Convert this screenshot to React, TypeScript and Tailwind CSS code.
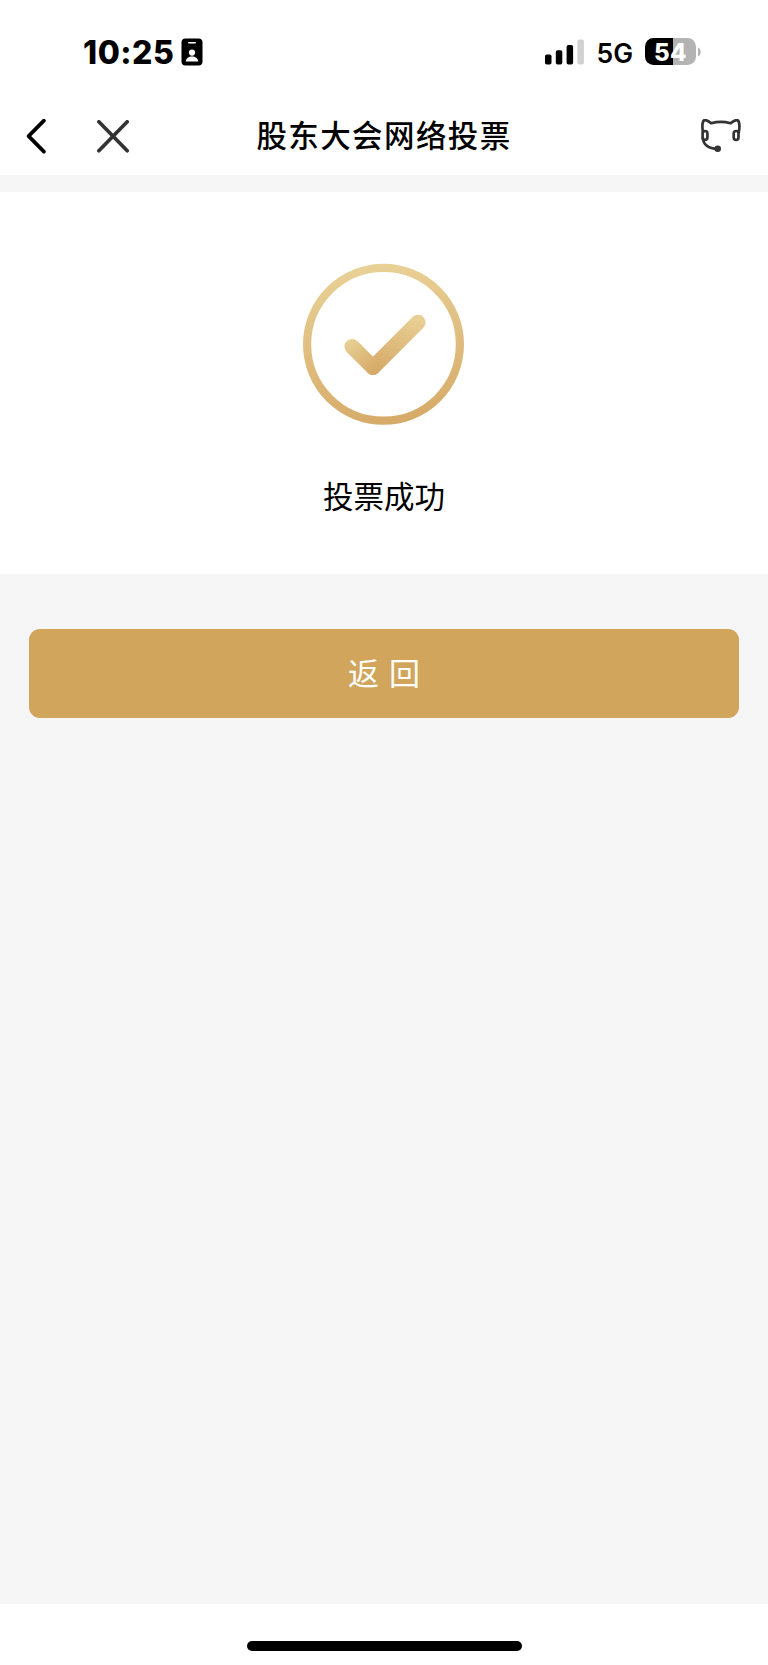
const StatusBar = () => {
  return (
    <div className="flex h-[100px] shrink-0 items-start justify-between pt-[32px] pr-[67px] pl-[83px]">
      <div className="flex h-10 items-center">
        <span className="w-[98px] pt-[2px] whitespace-nowrap font-['Inter',sans-serif] text-[32px] leading-10 font-extrabold tracking-[0.5px]">
          10:25
        </span>
        <svg width="22" height="28" viewBox="0 0 22 28">
          <rect x="0.5" y="0.5" width="21" height="27" rx="4" fill="#000" />
          <rect x="7" y="3.9" width="8" height="1.7" rx="0.8" fill="#fff" />
          <circle cx="11" cy="14.6" r="3.1" fill="#fff" />
          <path d="M5 23.4c0-3.2 2.6-4.8 6-4.8s6 1.6 6 4.8z" fill="#fff" />
        </svg>
      </div>
      <div className="flex h-10 items-center">
        <svg width="40" height="26" viewBox="0 0 40 26">
          <rect x="0" y="15.5" width="6.5" height="10" rx="1.8" />
          <rect x="10.8" y="11.3" width="6.5" height="14.2" rx="1.8" />
          <rect x="21.6" y="6" width="6.5" height="19.5" rx="1.8" />
          <rect x="32.4" y="0.6" width="6.5" height="24.9" rx="1.8" fill="#d1d1d1" />
        </svg>
        <span className="ml-[11.5px] w-[48.5px] pt-[2px] font-['Inter',sans-serif] text-[26.5px] leading-10 font-semibold">
          5G
        </span>
        <div className="mb-px flex h-[27px] w-[51px] items-center justify-center rounded-[8.5px] bg-linear-to-r from-black from-[54%] to-[#b3b3b3] to-[54%]">
          <span className="pt-[2px] font-['Inter',sans-serif] text-[24px] leading-none font-extrabold tracking-[0.5px] text-white">
            54
          </span>
        </div>
        <svg className="ml-[2px]" width="3" height="10" viewBox="0 0 3 10">
          <path d="M0 0.5C3.6 2 3.6 8 0 9.5z" fill="#b3b3b3" />
        </svg>
      </div>
    </div>
  );
};

const NavBar = () => {
  return (
    <div className="grid h-[75px] shrink-0 grid-cols-[1fr_auto_1fr] items-center pr-[26px] pb-[2px] pl-[26px]">
      <div className="flex items-center gap-[49px]">
        <svg width="22" height="36" viewBox="0 0 22 36" fill="none">
          <path
            d="M17.9 1.6 2.6 17.1 17.9 32.6"
            stroke="#000"
            strokeWidth="3.7"
            strokeLinecap="round"
            strokeLinejoin="round"
          />
        </svg>
        <svg width="34" height="34" viewBox="0 0 34 34" fill="none">
          <path
            d="M1.9 1.8 30.2 30.8M30.2 1.8 1.9 30.8"
            stroke="#333"
            strokeWidth="3.7"
            strokeLinecap="round"
          />
        </svg>
      </div>
      <h1 className="pb-[5px] font-['Noto_Sans_CJK_SC',sans-serif] text-[30.5px] leading-[44px] font-medium tracking-[1.4px]">
        股东大会网络投票
      </h1>
      <div className="flex justify-end">
        <svg width="42" height="36" viewBox="0.5 0.6 42 36" fill="none" stroke="#333" strokeWidth="2.7">
          <path
            d="M3.5 14C2.6 9 2.8 4.6 3.9 2.6c.9-1.7 4.6-.6 7.7 2.2 6-1.7 13.6-1.7 19.6 0 3.1-2.8 6.8-3.9 7.7-2.2 1.1 2 1.3 6.4.4 11.4"
            strokeLinecap="round"
            strokeLinejoin="round"
          />
          <rect x="3.1" y="12.6" width="4.8" height="9" rx="2.4" />
          <rect x="34.2" y="12.6" width="4.8" height="9" rx="2.4" />
          <path d="M3.3 19C3.6 25.8 8.5 30.4 18.2 30.4" />
          <circle cx="18.2" cy="30.4" r="3.3" fill="#333" stroke="none" />
        </svg>
      </div>
    </div>
  );
};

const SuccessIcon = () => {
  return (
    <svg width="162" height="162" viewBox="0 0 162 162" fill="none">
      <defs>
        <linearGradient id="ring" x1="70" y1="0" x2="92" y2="162" gradientUnits="userSpaceOnUse">
          <stop stopColor="#e9d197" />
          <stop offset="1" stopColor="#d6aa68" />
        </linearGradient>
        <linearGradient id="tickShort" x1="46" y1="78" x2="71" y2="108" gradientUnits="userSpaceOnUse">
          <stop stopColor="#e8cf94" />
          <stop offset="1" stopColor="#d6aa68" />
        </linearGradient>
        <linearGradient id="tickLong" x1="105" y1="52" x2="82" y2="110" gradientUnits="userSpaceOnUse">
          <stop stopColor="#e8cf94" />
          <stop offset="1" stopColor="#d6aa68" />
        </linearGradient>
      </defs>
      <circle cx="80.5" cy="81.3" r="76.4" stroke="url(#ring)" strokeWidth="8.2" />
      <path d="M115 59.3 70 104.3" stroke="url(#tickLong)" strokeWidth="15.2" strokeLinecap="round" />
      <path d="M49 83.5 70 104.3" stroke="url(#tickShort)" strokeWidth="15.2" strokeLinecap="round" />
    </svg>
  );
};

const App = () => {
  return (
    <div className="flex h-[1665px] w-full flex-col bg-white text-black">
      <StatusBar />
      <NavBar />
      <main className="flex flex-1 flex-col bg-[#f6f6f6] pt-[17px]">
        <section className="flex h-[381.5px] flex-col items-center bg-white pt-[71px]">
          <SuccessIcon />
          <p className="mt-[47.5px] font-['Noto_Sans_CJK_SC',sans-serif] text-[30.5px] leading-[44px]">
            投票成功
          </p>
        </section>
        <div className="px-[29px] pt-[55.5px]">
          <button className="h-[89px] w-full rounded-[11px] bg-[#d1a55c] pb-[3px] font-['Noto_Sans_CJK_SC',sans-serif] text-[31px] leading-[44px] text-white [word-spacing:3px]">
            返 回
          </button>
        </div>
      </main>
      <footer className="flex h-[61px] shrink-0 justify-center bg-white pt-[37px]">
        <div className="h-[9.5px] w-[275px] rounded-full bg-black" />
      </footer>
    </div>
  );
};

export default App;
